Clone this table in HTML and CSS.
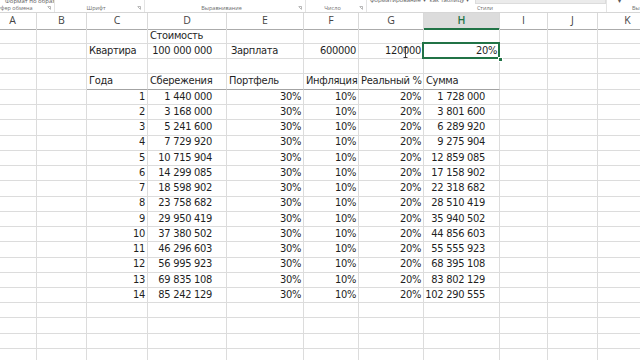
FILE: index.html
```html
<!DOCTYPE html>
<html lang="ru">
<head>
<meta charset="utf-8">
<title>Книга1 - Excel</title>
<link rel="stylesheet" href="styles.css">
</head>
<body>
<div class="app">
  <div class="ribbon">
    <div class="rg g1">
      <div class="rtop"><span class="tiny">Формат по образцу</span></div>
      <div class="rlabel"><span class="lbl">Буфер обмена</span><svg class="launch" viewBox="0 0 4 4"><path d="M0.5 0.5H3.5V3.5M1 1L3.2 3.2" fill="none" stroke="#8a8a8a" stroke-width="0.6"/></svg></div>
    </div>
    <div class="rg g2">
      <div class="rtop"></div>
      <div class="rlabel"><span class="lbl">Шрифт</span><svg class="launch" viewBox="0 0 4 4"><path d="M0.5 0.5H3.5V3.5M1 1L3.2 3.2" fill="none" stroke="#8a8a8a" stroke-width="0.6"/></svg></div>
    </div>
    <div class="rg g3">
      <div class="rtop"></div>
      <div class="rlabel"><span class="lbl">Выравнивание</span><svg class="launch" viewBox="0 0 4 4"><path d="M0.5 0.5H3.5V3.5M1 1L3.2 3.2" fill="none" stroke="#8a8a8a" stroke-width="0.6"/></svg></div>
    </div>
    <div class="rg g4">
      <div class="rtop"></div>
      <div class="rlabel"><span class="lbl">Число</span><svg class="launch" viewBox="0 0 4 4"><path d="M0.5 0.5H3.5V3.5M1 1L3.2 3.2" fill="none" stroke="#8a8a8a" stroke-width="0.6"/></svg></div>
    </div>
    <div class="rg g5">
      <div class="rtop styles-top"><span class="tiny">форматирование ▾</span><span class="tiny">как таблицу ▾</span><span class="gallery"></span></div>
      <div class="rlabel"><span class="lbl">Стили</span></div>
    </div>
    <div class="rg g6">
      <div class="rtop"><span class="tiny arrow">▾</span></div>
      <div class="rlabel left"><span class="lbl">Вы</span></div>
    </div>
  </div>

  <div class="sheet">
    <div class="row head">
      <div class="h">A</div><div class="h">B</div><div class="h">C</div><div class="h">D</div><div class="h">E</div><div class="h">F</div><div class="h">G</div><div class="h hsel">H</div><div class="h">I</div><div class="h">J</div><div class="h">K</div>
    </div>
    <div class="row">
      <div class="c"></div><div class="c"></div><div class="c"></div><div class="c l">Стоимость</div><div class="c"></div><div class="c"></div><div class="c"></div><div class="c"></div><div class="c"></div><div class="c"></div><div class="c"></div>
    </div>
    <div class="row">
      <div class="c"></div><div class="c"></div><div class="c l">Квартира</div><div class="c rn">100 000 000</div><div class="c l e">Зарплата</div><div class="c r">600000</div><div class="c r">120000<svg class="ibeam" viewBox="0 0 5 11"><path d="M0.5 0.5H4.5M2.5 0.5V10.5M0.5 10.5H4.5" fill="none" stroke="#ffffff" stroke-width="1.6"/><path d="M0.5 0.5H4.5M2.5 0.5V10.5M0.5 10.5H4.5" fill="none" stroke="#111111" stroke-width="0.8"/></svg></div><div class="c r sel">20%</div><div class="c"></div><div class="c"></div><div class="c"></div>
    </div>
    <div class="row">
      <div class="c"></div><div class="c"></div><div class="c"></div><div class="c"></div><div class="c"></div><div class="c"></div><div class="c"></div><div class="c"></div><div class="c"></div><div class="c"></div><div class="c"></div>
    </div>
    <div class="row">
      <div class="c"></div><div class="c"></div><div class="c l bb">Года</div><div class="c l bb">Сбережения</div><div class="c l bb">Портфель</div><div class="c l bb">Инфляция</div><div class="c l bb">Реальный %</div><div class="c l bb">Сумма</div><div class="c"></div><div class="c"></div><div class="c"></div>
    </div>
    <div class="row">
      <div class="c"></div><div class="c"></div><div class="c r">1</div><div class="c rn">1 440 000</div><div class="c r">30%</div><div class="c r">10%</div><div class="c r">20%</div><div class="c rn">1 728 000</div><div class="c"></div><div class="c"></div><div class="c"></div>
    </div>
    <div class="row">
      <div class="c"></div><div class="c"></div><div class="c r">2</div><div class="c rn">3 168 000</div><div class="c r">30%</div><div class="c r">10%</div><div class="c r">20%</div><div class="c rn">3 801 600</div><div class="c"></div><div class="c"></div><div class="c"></div>
    </div>
    <div class="row">
      <div class="c"></div><div class="c"></div><div class="c r">3</div><div class="c rn">5 241 600</div><div class="c r">30%</div><div class="c r">10%</div><div class="c r">20%</div><div class="c rn">6 289 920</div><div class="c"></div><div class="c"></div><div class="c"></div>
    </div>
    <div class="row">
      <div class="c"></div><div class="c"></div><div class="c r">4</div><div class="c rn">7 729 920</div><div class="c r">30%</div><div class="c r">10%</div><div class="c r">20%</div><div class="c rn">9 275 904</div><div class="c"></div><div class="c"></div><div class="c"></div>
    </div>
    <div class="row">
      <div class="c"></div><div class="c"></div><div class="c r">5</div><div class="c rn">10 715 904</div><div class="c r">30%</div><div class="c r">10%</div><div class="c r">20%</div><div class="c rn">12 859 085</div><div class="c"></div><div class="c"></div><div class="c"></div>
    </div>
    <div class="row">
      <div class="c"></div><div class="c"></div><div class="c r">6</div><div class="c rn">14 299 085</div><div class="c r">30%</div><div class="c r">10%</div><div class="c r">20%</div><div class="c rn">17 158 902</div><div class="c"></div><div class="c"></div><div class="c"></div>
    </div>
    <div class="row">
      <div class="c"></div><div class="c"></div><div class="c r">7</div><div class="c rn">18 598 902</div><div class="c r">30%</div><div class="c r">10%</div><div class="c r">20%</div><div class="c rn">22 318 682</div><div class="c"></div><div class="c"></div><div class="c"></div>
    </div>
    <div class="row">
      <div class="c"></div><div class="c"></div><div class="c r">8</div><div class="c rn">23 758 682</div><div class="c r">30%</div><div class="c r">10%</div><div class="c r">20%</div><div class="c rn">28 510 419</div><div class="c"></div><div class="c"></div><div class="c"></div>
    </div>
    <div class="row">
      <div class="c"></div><div class="c"></div><div class="c r">9</div><div class="c rn">29 950 419</div><div class="c r">30%</div><div class="c r">10%</div><div class="c r">20%</div><div class="c rn">35 940 502</div><div class="c"></div><div class="c"></div><div class="c"></div>
    </div>
    <div class="row">
      <div class="c"></div><div class="c"></div><div class="c r">10</div><div class="c rn">37 380 502</div><div class="c r">30%</div><div class="c r">10%</div><div class="c r">20%</div><div class="c rn">44 856 603</div><div class="c"></div><div class="c"></div><div class="c"></div>
    </div>
    <div class="row">
      <div class="c"></div><div class="c"></div><div class="c r">11</div><div class="c rn">46 296 603</div><div class="c r">30%</div><div class="c r">10%</div><div class="c r">20%</div><div class="c rn">55 555 923</div><div class="c"></div><div class="c"></div><div class="c"></div>
    </div>
    <div class="row">
      <div class="c"></div><div class="c"></div><div class="c r">12</div><div class="c rn">56 995 923</div><div class="c r">30%</div><div class="c r">10%</div><div class="c r">20%</div><div class="c rn">68 395 108</div><div class="c"></div><div class="c"></div><div class="c"></div>
    </div>
    <div class="row">
      <div class="c"></div><div class="c"></div><div class="c r">13</div><div class="c rn">69 835 108</div><div class="c r">30%</div><div class="c r">10%</div><div class="c r">20%</div><div class="c rn">83 802 129</div><div class="c"></div><div class="c"></div><div class="c"></div>
    </div>
    <div class="row">
      <div class="c"></div><div class="c"></div><div class="c r">14</div><div class="c rn">85 242 129</div><div class="c r">30%</div><div class="c r">10%</div><div class="c r">20%</div><div class="c rn">102 290 555</div><div class="c"></div><div class="c"></div><div class="c"></div>
    </div>
    <div class="row">
      <div class="c"></div><div class="c"></div><div class="c"></div><div class="c"></div><div class="c"></div><div class="c"></div><div class="c"></div><div class="c"></div><div class="c"></div><div class="c"></div><div class="c"></div>
    </div>
    <div class="row">
      <div class="c"></div><div class="c"></div><div class="c"></div><div class="c"></div><div class="c"></div><div class="c"></div><div class="c"></div><div class="c"></div><div class="c"></div><div class="c"></div><div class="c"></div>
    </div>
    <div class="row">
      <div class="c"></div><div class="c"></div><div class="c"></div><div class="c"></div><div class="c"></div><div class="c"></div><div class="c"></div><div class="c"></div><div class="c"></div><div class="c"></div><div class="c"></div>
    </div>
    <div class="row">
      <div class="c"></div><div class="c"></div><div class="c"></div><div class="c"></div><div class="c"></div><div class="c"></div><div class="c"></div><div class="c"></div><div class="c"></div><div class="c"></div><div class="c"></div>
    </div>
  </div>
</div>
</body>
</html>
```

FILE: styles.css
```css
html, body {
  margin: 0;
  padding: 0;
  background: #ffffff;
}
body {
  width: 640px;
  height: 360px;
  overflow: hidden;
  font-family: "DejaVu Sans Condensed", Roboto, sans-serif;
}
.app {
  width: 640px;
  height: 360px;
  overflow: hidden;
}

/* ---------- ribbon strip ---------- */
.ribbon {
  display: flex;
  height: 11.5px;
  margin-left: -20px;
  border-bottom: 1px solid #d6d6d6;
  background: #ffffff;
  overflow: hidden;
  font-family: "Open Sans", sans-serif;
}
.rg {
  display: flex;
  flex-direction: column;
  flex: none;
  border-right: 1px solid #e4e4e4;
  box-sizing: border-box;
}
.g1 { width: 75px; }
.g2 { width: 90px; }
.g3 { width: 161px; }
.g4 { width: 61px; }
.g5 { width: 240px; }
.g6 { width: 60px; border-right: none; }
.rtop {
  height: 5px;
  display: flex;
  align-items: flex-end;
  overflow: hidden;
}
.g1 .rtop { padding-left: 25px; }
.tiny {
  font-size: 6px;
  line-height: 6px;
  color: #5a5a5a;
  white-space: nowrap;
  margin-bottom: 1px;
}
.styles-top {
  padding-left: 3px;
  gap: 4px;
  align-items: flex-start;
}
.styles-top .tiny {
  margin-top: -3px;
}
.gallery {
  width: 148px;
  height: 3px;
  background: #ebebeb;
  border: 1px solid #dcdcdc;
  border-top: none;
  margin-left: 2px;
}
.g6 .rtop { padding-left: 11px; }
.arrow { margin-bottom: 1px; }
.rlabel {
  flex: 1;
  display: flex;
  align-items: center;
  padding-right: 3px;
}
.lbl {
  flex: 1;
  text-align: center;
  font-size: 5.5px;
  line-height: 6px;
  color: #6e6e6e;
  white-space: nowrap;
}
.rlabel.left .lbl {
  text-align: left;
  padding-left: 25px;
}
.launch {
  width: 4px;
  height: 4px;
  flex: none;
}

/* ---------- sheet ---------- */
.sheet {
  margin-left: -11px;
}
.row {
  display: grid;
  grid-template-columns: 48px 50px 61px 79px 77px 55px 65px 76px 48px 50px 60px;
  height: 15.25px;
}
.row.head {
  height: 16px;
}
.h {
  box-sizing: border-box;
  border-right: 1px solid #d9d9d9;
  border-bottom: 1px solid #ababab;
  text-align: center;
  font-family: "Open Sans", sans-serif;
  font-size: 10.5px;
  line-height: 15px;
  color: #444444;
  background: #ffffff;
}
.h.hsel {
  background: #dcdcdc;
  color: #217346;
  font-weight: 600;
  border-bottom: 2px solid #217346;
}
.c {
  position: relative;
  box-sizing: border-box;
  border-right: 1px solid #dcdcdc;
  border-bottom: 1px solid #dcdcdc;
  font-size: 11px;
  line-height: 14.5px;
  letter-spacing: -0.3px;
  color: #1f1f1f;
  white-space: nowrap;
  overflow: visible;
}
.c.l {
  text-align: left;
  padding-left: 2px;
}
.c.l.e {
  padding-left: 4px;
}
.c.r {
  text-align: right;
  padding-right: 2px;
}
.c.rn {
  text-align: right;
  padding-right: 14px;
}
.c.bb {
  border-bottom-color: #a3a3a3;
}
.ibeam {
  position: absolute;
  left: 44px;
  top: 3px;
  width: 5px;
  height: 11px;
}
.c.sel::after {
  content: "";
  position: absolute;
  left: -2px;
  top: -2px;
  right: -1px;
  bottom: -1px;
  border: 2px solid #217346;
  pointer-events: none;
}
.c.sel::before {
  content: "";
  position: absolute;
  right: -4px;
  bottom: -4px;
  width: 5px;
  height: 5px;
  background: #217346;
  border: 1px solid #ffffff;
  box-sizing: border-box;
  z-index: 2;
}
```
